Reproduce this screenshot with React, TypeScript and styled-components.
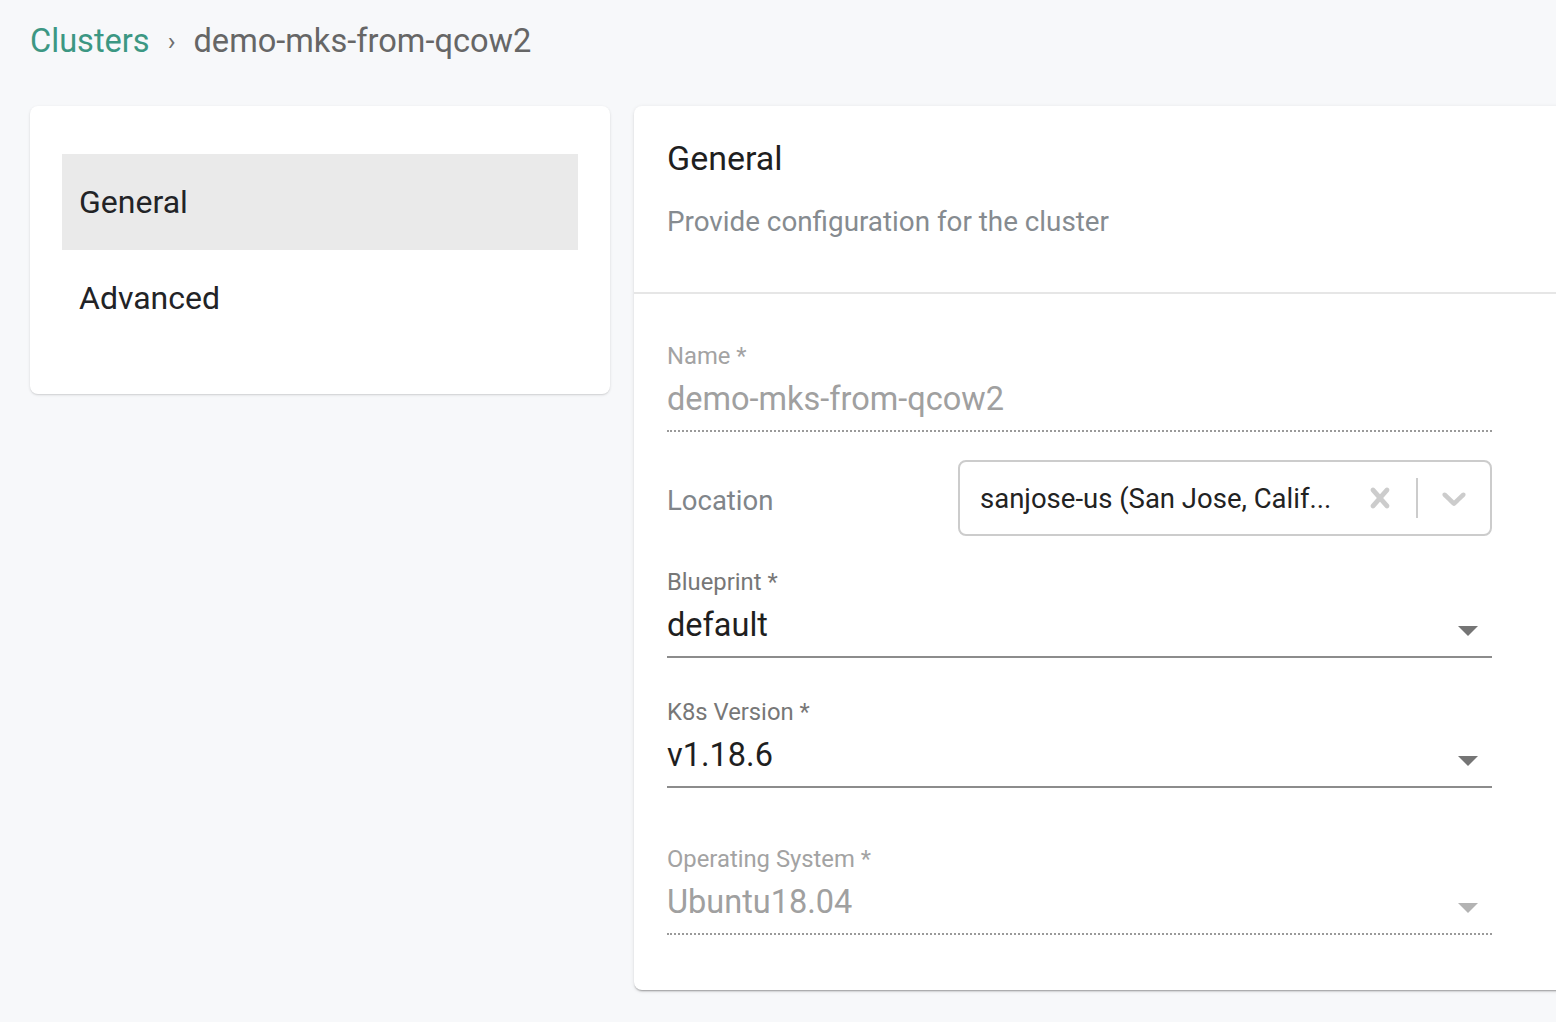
import React from 'react'
import styled, { createGlobalStyle } from 'styled-components'

const GlobalStyle = createGlobalStyle`
  html, body {
    margin: 0;
    padding: 0;
    background: #f7f8fa;
    font-family: Roboto, 'Liberation Sans', Arial, sans-serif;
  }
  #root {
    width: 1556px;
    height: 1022px;
    overflow: hidden;
  }
`

const Page = styled.div`
  padding: 20px 0 0 30px;
`

const Breadcrumb = styled.div`
  display: flex;
  align-items: center;
  height: 42px;
  font-size: 32.6px;
  line-height: 42px;
`

const CrumbLink = styled.span`
  color: #3c9783;
`

const CrumbSep = styled.span`
  color: #6f6f6f;
  font-size: 26px;
  margin: 0 18px 0 18px;
`

const CrumbCurrent = styled.span`
  color: #666666;
`

const Columns = styled.div`
  display: flex;
  align-items: flex-start;
  gap: 24px;
  margin-top: 44px;
`

const Card = styled.div`
  background: #ffffff;
  border-radius: 8px;
  box-shadow: 0 1px 3px rgba(0, 0, 0, 0.12), 0 1px 1px rgba(0, 0, 0, 0.06);
`

const NavCard = styled(Card)`
  width: 580px;
  flex-shrink: 0;
  padding: 48px 32px;
  box-sizing: border-box;
`

const NavItem = styled.div<{ $active?: boolean }>`
  height: 96px;
  display: flex;
  align-items: center;
  padding-left: 17px;
  font-size: 32px;
  color: #222326;
  background: ${({ $active }) => ($active ? '#eaeaea' : 'transparent')};
`

const MainCard = styled(Card)`
  width: 960px;
  flex-shrink: 0;
  height: 884px;
  box-shadow: 0 2px 2px -1px rgba(0, 0, 0, 0.35), 0 1px 4px rgba(0, 0, 0, 0.1);
`

const Header = styled.div`
  padding: 32px 33px 54px;
  border-bottom: 2px solid #e6e6e6;
`

const Title = styled.div`
  font-size: 34px;
  line-height: 40px;
  color: #1f1f1f;
`

const Subtitle = styled.div`
  margin-top: 28px;
  font-size: 27.8px;
  line-height: 32px;
  color: #868b90;
`

const Form = styled.div`
  width: 825px;
  padding: 48px 0 0 33px;
  display: flex;
  flex-direction: column;
`

const Field = styled.div<{ $top?: number }>`
  display: flex;
  flex-direction: column;
  margin-top: ${({ $top }) => $top ?? 0}px;
`

const Label = styled.div<{ $disabled?: boolean }>`
  font-size: 23.8px;
  line-height: 28px;
  color: ${({ $disabled }) => ($disabled ? '#a3a3a3' : '#777777')};
`

const InputRow = styled.div<{ $disabled?: boolean }>`
  height: 62px;
  display: flex;
  align-items: center;
  justify-content: space-between;
  box-sizing: border-box;
  padding-bottom: 2px;
  border-bottom: ${({ $disabled }) =>
    $disabled ? '2px dotted #9a9a9a' : '2px solid #8c8c8c'};
`

const Value = styled.div<{ $disabled?: boolean }>`
  font-size: 32.5px;
  line-height: 40px;
  color: ${({ $disabled }) => ($disabled ? '#a0a0a0' : '#1f1f1f')};
`

const Caret = styled.div<{ $disabled?: boolean }>`
  width: 0;
  height: 0;
  margin-right: 14px;
  margin-top: 12px;
  border-left: 10px solid transparent;
  border-right: 10px solid transparent;
  border-top: 10px solid ${({ $disabled }) => ($disabled ? '#b3b3b3' : '#757575')};
`

const LocationRow = styled.div`
  display: flex;
  align-items: center;
  margin-top: 28px;
`

const LocationLabel = styled.div`
  width: 291px;
  padding-top: 4px;
  font-size: 27.5px;
  color: #80858a;
`

const SelectBox = styled.div`
  flex: 1;
  height: 76px;
  box-sizing: border-box;
  border: 2px solid #cccccc;
  border-radius: 8px;
  display: flex;
  align-items: center;
`

const SelectValue = styled.div`
  flex: 1;
  padding-left: 20px;
  font-size: 27.5px;
  color: #222222;
  white-space: nowrap;
`

const Indicator = styled.div`
  padding: 0 16px;
  display: flex;
  align-items: center;
  color: #cccccc;
`

const IndicatorSep = styled.div`
  width: 2px;
  height: 40px;
  background: #cccccc;
`

const CrossIcon = () => (
  <svg width="40" height="40" viewBox="0 0 20 20" fill="currentColor">
    <path d="M14.348 14.849c-0.469 0.469-1.229 0.469-1.697 0l-2.651-3.030-2.651 3.029c-0.469 0.469-1.229 0.469-1.697 0-0.469-0.469-0.469-1.229 0-1.697l2.758-3.15-2.759-3.152c-0.469-0.469-0.469-1.228 0-1.697s1.228-0.469 1.697 0l2.652 3.031 2.651-3.031c0.469-0.469 1.228-0.469 1.697 0s0.469 1.229 0 1.697l-2.758 3.152 2.758 3.15c0.469 0.469 0.469 1.229 0 1.698z" />
  </svg>
)

const ChevronIcon = () => (
  <svg width="40" height="40" viewBox="0 0 20 20" fill="currentColor">
    <path d="M4.516 7.548c0.436-0.446 1.043-0.481 1.576 0l3.908 3.747 3.908-3.747c0.533-0.481 1.141-0.446 1.574 0 0.436 0.445 0.408 1.197 0 1.615-0.406 0.418-4.695 4.502-4.695 4.502-0.217 0.223-0.502 0.335-0.787 0.335s-0.57-0.112-0.789-0.335c0 0-4.287-4.084-4.695-4.502s-0.436-1.17 0-1.615z" />
  </svg>
)

export default function App() {
  return (
    <>
      <GlobalStyle />
      <Page>
        <Breadcrumb>
          <CrumbLink>Clusters</CrumbLink>
          <CrumbSep>›</CrumbSep>
          <CrumbCurrent>demo-mks-from-qcow2</CrumbCurrent>
        </Breadcrumb>
        <Columns>
          <NavCard>
            <NavItem $active>General</NavItem>
            <NavItem>Advanced</NavItem>
          </NavCard>
          <MainCard>
            <Header>
              <Title>General</Title>
              <Subtitle>Provide configuration for the cluster</Subtitle>
            </Header>
            <Form>
              <Field>
                <Label $disabled>Name *</Label>
                <InputRow $disabled>
                  <Value $disabled>demo-mks-from-qcow2</Value>
                </InputRow>
              </Field>
              <LocationRow>
                <LocationLabel>Location</LocationLabel>
                <SelectBox>
                  <SelectValue>sanjose-us (San Jose, Calif...</SelectValue>
                  <Indicator>
                    <CrossIcon />
                  </Indicator>
                  <IndicatorSep />
                  <Indicator>
                    <ChevronIcon />
                  </Indicator>
                </SelectBox>
              </LocationRow>
              <Field $top={32}>
                <Label>Blueprint *</Label>
                <InputRow>
                  <Value>default</Value>
                  <Caret />
                </InputRow>
              </Field>
              <Field $top={40}>
                <Label>K8s Version *</Label>
                <InputRow>
                  <Value>v1.18.6</Value>
                  <Caret />
                </InputRow>
              </Field>
              <Field $top={57}>
                <Label $disabled>Operating System *</Label>
                <InputRow $disabled>
                  <Value $disabled>Ubuntu18.04</Value>
                  <Caret $disabled />
                </InputRow>
              </Field>
            </Form>
          </MainCard>
        </Columns>
      </Page>
    </>
  )
}
